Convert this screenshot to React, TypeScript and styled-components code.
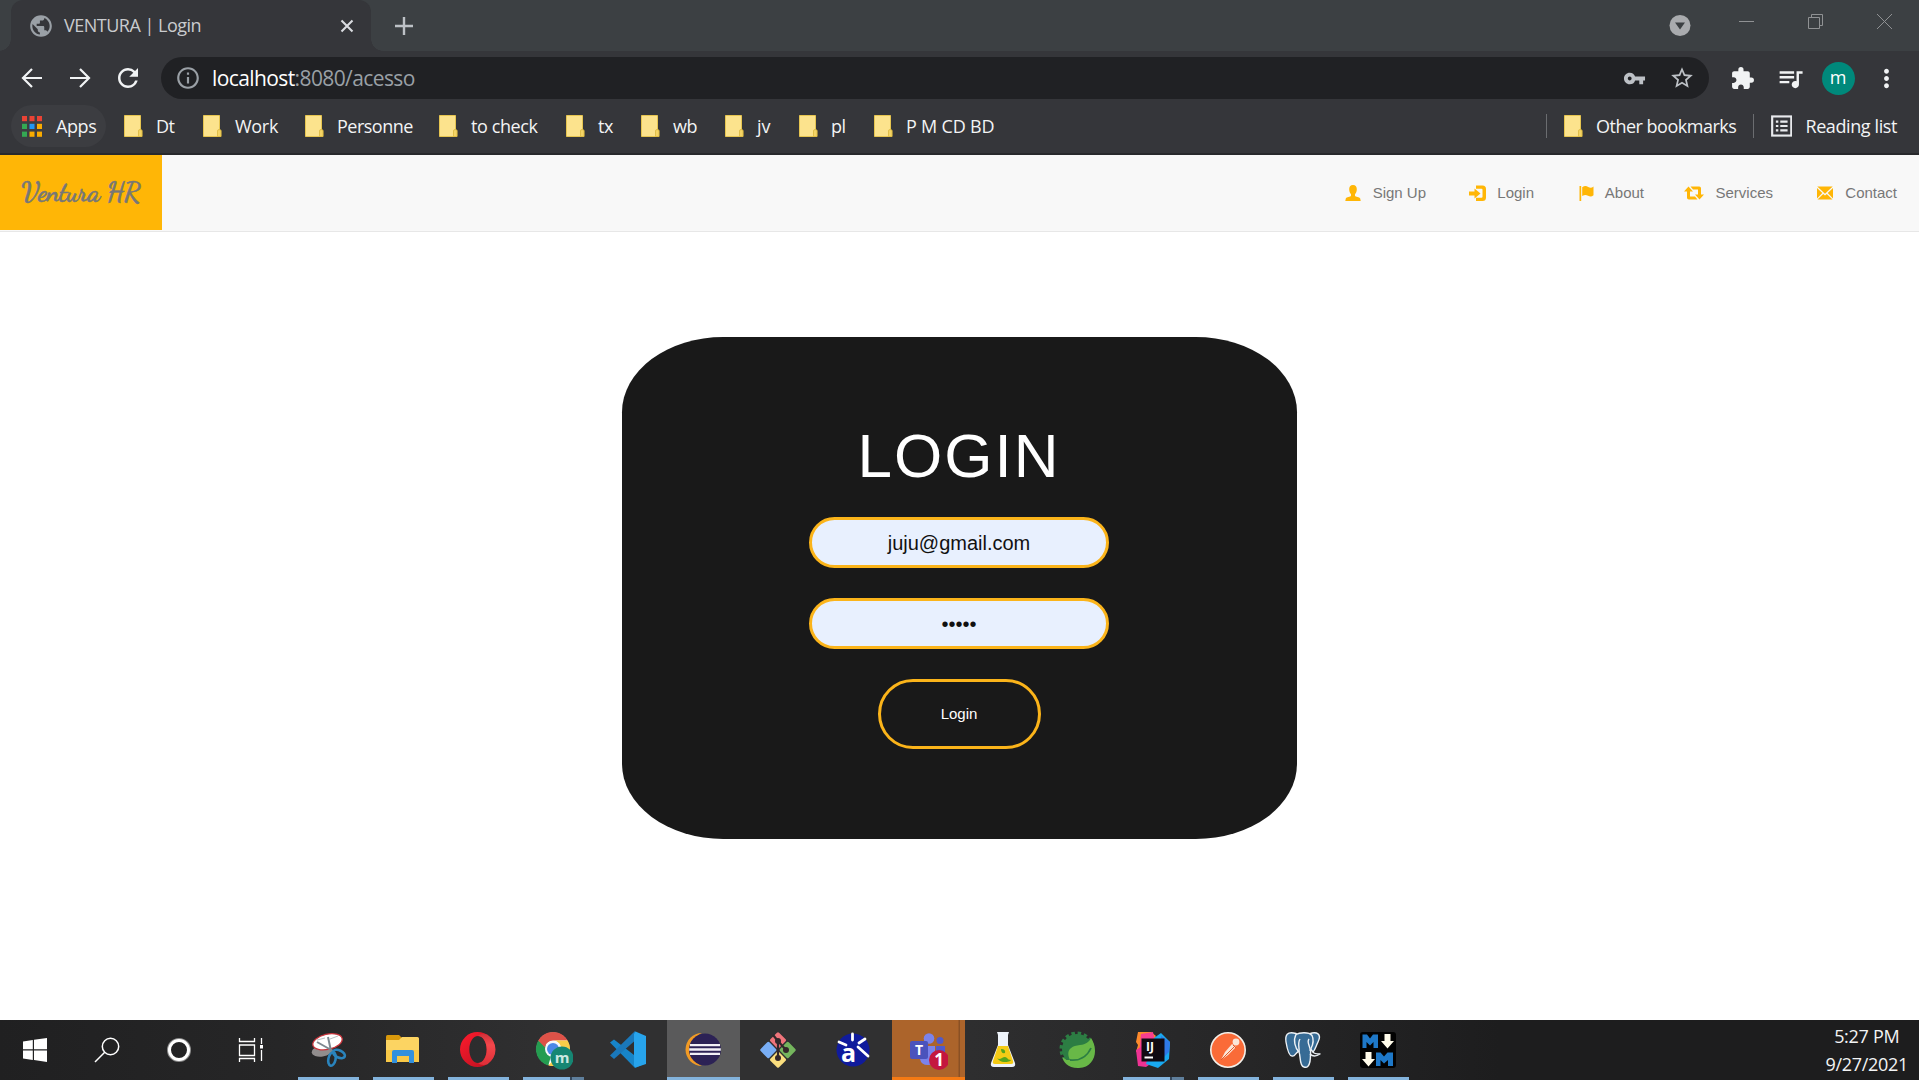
import React from "react";
import styled, { createGlobalStyle, css } from "styled-components";
import {
  MdPublic,
  MdRefresh,
  MdInfoOutline,
  MdVpnKey,
  MdStarBorder,
  MdExtension,
  MdQueueMusic,
  MdMoreVert,
} from "react-icons/md";

const UI_FONT = '"Segoe UI", "Open Sans", "Noto Sans", sans-serif';
const PAGE_FONT = '"Liberation Sans", Arial, sans-serif';
const AMBER = "#ffb606";

const GlobalStyle = createGlobalStyle`
  *, *::before, *::after { box-sizing: border-box; }
  body { margin: 0; background: #fff; overflow: hidden; }
`;

const Screen = styled.div`
  display: flex;
  flex-direction: column;
  width: 1919px;
  height: 1080px;
  background: #fff;
`;

/* ---------- Browser chrome ---------- */

const TabStrip = styled.div`
  display: flex;
  height: 51px;
  flex: none;
  padding-left: 11px;
  background: #3c4043;
`;

const Tab = styled.div`
  position: relative;
  display: flex;
  align-items: center;
  width: 360px;
  padding: 0 14px 0 17px;
  background: #35363a;
  border-radius: 12px 12px 0 0;
  color: #c9cbce;

  &::before,
  &::after {
    content: "";
    position: absolute;
    bottom: 0;
    width: 12px;
    height: 12px;
  }
  &::before {
    left: -12px;
    background: radial-gradient(circle at 0 0, transparent 11.5px, #35363a 12px);
  }
  &::after {
    right: -12px;
    background: radial-gradient(circle at 100% 0, transparent 11.5px, #35363a 12px);
  }
`;

const UiText = styled.span<{ $size?: number; $spacing?: number; $color?: string }>`
  font-family: ${UI_FONT};
  font-size: ${(p) => p.$size ?? 18}px;
  letter-spacing: ${(p) => p.$spacing ?? 0}px;
  color: ${(p) => p.$color ?? "#f3f4f5"};
  line-height: 26px;
  white-space: pre;
`;

const TabTitle = styled(UiText)`
  flex: 1;
  margin: 0 0 1px 10px;
`;

const NewTab = styled.div`
  display: flex;
  align-items: center;
  margin-left: 22px;
`;

const WindowControls = styled.div`
  display: flex;
  align-items: flex-start;
  margin-left: auto;
`;

const TabSearch = styled.div`
  padding-top: 14px;
  margin-right: 21px;
  line-height: 0;
`;

const WindowButton = styled.div`
  width: 69px;
  padding-top: 13px;
  display: flex;
  justify-content: center;
  line-height: 0;
`;

const Toolbar = styled.div`
  display: flex;
  align-items: center;
  flex: none;
  height: 54px;
  padding: 0 9px 0 8px;
  background: #35363a;
  color: #f1f3f4;
`;

const ToolButton = styled.div`
  display: flex;
  align-items: center;
  justify-content: center;
  width: 48px;
  height: 42px;
`;

const Omnibox = styled.div`
  display: flex;
  align-items: center;
  width: 1548px;
  height: 42px;
  margin: 0 9px;
  padding: 0 3px 0 14px;
  border-radius: 21px;
  background: #202124;
  color: #bdc1c6;
`;

const Address = styled.div`
  flex: 1;
  margin-left: 11px;
  display: flex;
`;

const Avatar = styled.div`
  display: flex;
  justify-content: center;
  width: 33px;
  height: 33px;
  padding-top: 2px;
  border-radius: 50%;
  background: #00897b;
`;

const BookmarksBar = styled.div`
  display: flex;
  align-items: center;
  flex: none;
  height: 50px;
  padding: 0 22px 6px 11px;
  background: #35363a;
  border-bottom: 2px solid #28292c;
`;

const AppsButton = styled.div`
  display: flex;
  align-items: center;
  gap: 14px;
  width: 95px;
  height: 42px;
  margin-right: 18px;
  padding-left: 11px;
  border-radius: 21px;
  background: #3c3d41;
`;

const Bookmark = styled.div<{ $width: number }>`
  display: flex;
  align-items: center;
  gap: 13px;
  width: ${(p) => p.$width}px;
`;

const BarLabel = styled(UiText)`
  margin-bottom: 1px;
`;

const Separator = styled.div`
  width: 1px;
  height: 24px;
  background: #6b6d70;
`;

const BookmarksEnd = styled.div`
  display: flex;
  align-items: center;
  margin-left: auto;

  ${Bookmark} {
    padding-left: 17px;
  }
`;

/* ---------- Site header ---------- */

const SiteHeader = styled.header`
  display: flex;
  flex: none;
  height: 77px;
  background: #f8f8f8;
  border-bottom: 1px solid #e7e7e7;
  font-family: ${PAGE_FONT};
`;

const Brand = styled.div`
  width: 162px;
  height: 75px;
  padding-left: 21px;
  background: ${AMBER};
  color: #777;
  font-family: "Dancing Script", cursive;
  font-weight: 700;
  font-size: 27px;
  -webkit-text-stroke: 0.5px #777;
  letter-spacing: -0.3px;
  line-height: 76px;
  white-space: nowrap;
`;

const Nav = styled.nav`
  display: flex;
  align-items: center;
  margin-left: auto;
  padding-right: 22px;
`;

const NavLink = styled.a<{ $width: number }>`
  display: flex;
  align-items: center;
  justify-content: flex-end;
  gap: 11px;
  width: ${(p) => p.$width}px;
  color: #777;
  font-size: 15px;
  line-height: 20px;
`;

/* ---------- Login page ---------- */

const Main = styled.main`
  display: flex;
  flex: 1;
  justify-content: center;
  align-items: flex-start;
  padding: 105px 1px 0 0;
  background: #fff;
  font-family: ${PAGE_FONT};
`;

const Card = styled.form`
  display: flex;
  flex-direction: column;
  align-items: center;
  width: 675px;
  height: 502px;
  padding-top: 84px;
  border-radius: 15%;
  background: #191919;
`;

const Heading = styled.h1`
  margin: 0 0 27px;
  color: #fff;
  font-size: 62px;
  font-weight: 400;
  letter-spacing: 2px;
  line-height: 69px;
`;

const Field = styled.input`
  display: block;
  width: 300px;
  height: 51px;
  margin: 0 0 30px;
  padding: 1px 10px 0;
  border: 3px solid #fbb41a;
  border-radius: 25.5px;
  outline: none;
  background: #e8f0fe;
  color: #111;
  font-family: ${PAGE_FONT};
  font-size: 20px;
  text-align: center;
`;

const Submit = styled.button`
  width: 163px;
  height: 70px;
  padding: 0 0 2px;
  border: 3px solid #fbb41a;
  border-radius: 35px;
  background: none;
  color: #fff;
  font-family: ${PAGE_FONT};
  font-size: 15px;
`;

/* ---------- Taskbar ---------- */

const Taskbar = styled.footer`
  display: flex;
  flex: none;
  height: 60px;
  background: linear-gradient(90deg, #202021 0, #262627 280px, #303031 560px, #303031 900px, #262627 1250px, #1d1d1e 1500px);
`;

const SystemButton = styled.div`
  display: flex;
  align-items: center;
  justify-content: center;
  width: 72px;
`;

const SystemArea = styled.div`
  display: flex;
  width: 290px;
  margin-left: -1px;
  margin-right: 3px;
`;

type TaskState = "idle" | "open" | "stacked" | "active" | "alert";

const TaskSlot = styled.div<{ $state: TaskState }>`
  display: flex;
  flex-direction: column;
  align-items: center;
  width: 73px;
  margin-right: 2px;
  ${(p) => p.$state === "active" && css`background: #5a5a5b;`}
  ${(p) =>
    p.$state === "alert" &&
    css`
      background: linear-gradient(90deg, #ac642b 0 66px, #8a5024 67px 68px, #ac642b 68px);
    `}
`;

const TaskIcon = styled.div`
  display: flex;
  align-items: center;
  justify-content: center;
  height: 57px;
  padding: 3px 1px 0 0;
`;

const TaskLine = styled.div<{ $state: TaskState }>`
  height: 3px;
  width: ${(p) => (p.$state === "active" || p.$state === "alert" ? 73 : 61)}px;
  background: ${(p) =>
    p.$state === "idle"
      ? "transparent"
      : p.$state === "alert"
      ? "#f57a14"
      : p.$state === "stacked"
      ? "linear-gradient(90deg, #83b3dc 0 47px, #34465a 47px 49px, #5f7f9c 49px)"
      : "#83b3dc"};
`;

const Clock = styled.div`
  display: flex;
  flex-direction: column;
  align-items: center;
  justify-content: center;
  gap: 2px;
  margin-left: auto;
  padding: 0 11px 1px 0;
`;

/* ---------- Icons ---------- */

const ArrowIcon = ({ flip }: { flip?: boolean }) => (
  <svg width="22" height="22" viewBox="0 0 22 22" fill="none" stroke="#f1f3f4" strokeWidth="2.2">
    <path d={flip ? "M1 11H20M11 2l9 9-9 9" : "M21 11H2M11 2l-9 9 9 9"} />
  </svg>
);

const CloseIcon = () => (
  <svg width="20" height="20" viewBox="0 0 20 20" stroke="#dadce0" strokeWidth="2.1">
    <path d="M4.5 4.5l11 11M15.5 4.5l-11 11" />
  </svg>
);

const PlusIcon = () => (
  <svg width="22" height="22" viewBox="0 0 22 22" stroke="#bdc1c6" strokeWidth="2.4">
    <path d="M2 11h18M11 2v18" />
  </svg>
);

const FolderIcon = () => (
  <svg width="19" height="22" viewBox="0 0 19 22">
    <path d="M.5.5h16V15h1.3v6.5H.5z" fill="#fce38d" stroke="#e6c550" />
    <path d="M14.5 21.5V16q0-1.500 1.500-1.500t2 1.500v5.500z" fill="#f4d466" stroke="#dbb73d" strokeWidth=".8" />
  </svg>
);

const APP_COLORS = ["#ea4335", "#ea4335", "#ea4335", "#34a853", "#2196f3", "#f9ab00", "#34a853", "#f9ab00", "#f9ab00"];
const AppsIcon = () => (
  <svg width="20" height="21" viewBox="0 0 20 21">
    {APP_COLORS.map((c, i) => (
      <rect key={i} x={(i % 3) * 7.5} y={Math.floor(i / 3) * 7.8} width="5" height="5.2" fill={c} />
    ))}
  </svg>
);

const ReadingIcon = () => (
  <svg width="22" height="22" viewBox="0 0 22 22" fill="none" stroke="#e8eaed">
    <rect x="1.2" y="1.2" width="19.6" height="19.6" strokeWidth="2.2" />
    <path d="M5 6.500h2.500M5 11h2.500M5 15.500h2.500M9.500 6.500H17M9.500 11H17M9.500 15.500H17" strokeWidth="2.2" />
  </svg>
);

const NAV_GLYPHS: Record<string, React.ReactNode> = {
  user: (
    <path d="M8 0C5.400 0 4 1.900 4.200 4.500 4.300 6.500 5 8.200 6 9.200v1.600C5.500 12 1.500 12 .8 13.500L.3 16h15.400l-.5-2.500C14.500 12 10.500 12 10 10.800V9.200c1-1 1.700-2.700 1.800-4.700C12 1.900 10.600 0 8 0z" />
  ),
  login: (
    <path d="M7 .5h6.500Q17 .5 17 4v8.500q0 3.500-3.500 3.500H7v-3.200h5.500q1 0 1-1V4.700q0-1-1-1H7zM5.500 3.500L11.500 8.500l-6 5V10.500H0V6.500h5.500z" />
  ),
  flag: (
    <path d="M.5 1h1.700v15H.5zM3.200 2.200C5.500.7 7.200.7 9.200 1.900s3.500 1 5.300-.4v8.800c-1.800 1.500-3.500 1.500-5.500.4s-3.500-1-5.800.4z" />
  ),
  services: (
    <path d="M4.500 1.500L9 6.500H6v5h5l2.500 3H4.800Q3 14.500 3 12.700V6.500H0zM6.500 1.500h8.700q1.800 0 1.800 1.800v6.200h3l-4.500 5-4.500-5h3v-5H9z" />
  ),
  mail: (
    <path d="M.3 1.500h15.400L8 8.700zM0 2.900L5.300 8 0 13.600zM16 2.900L10.700 8l5.300 5.600zM6.200 8.900L8 10.600l1.800-1.700 5.700 5.600H.5z" />
  ),
};

const NavGlyph = ({ name, width }: { name: string; width: number }) => (
  <svg width={width} height="17" viewBox={`0 0 ${width} 17`} fill={AMBER}>
    {NAV_GLYPHS[name]}
  </svg>
);

const Logo = ({ children }: { children: React.ReactNode }) => (
  <svg width="40" height="40" viewBox="0 0 40 40">
    {children}
  </svg>
);

const LogoText = styled.text`
  font-family: ${UI_FONT};
  font-weight: 700;
  text-anchor: middle;
`;

const SnipLogo = () => (
  <Logo>
    <ellipse cx="14" cy="21" rx="10.500" ry="5.500" transform="rotate(-8 14 21)" fill="#918d8d" />
    <ellipse cx="19.500" cy="11.800" rx="15" ry="7.600" transform="rotate(-13 19.500 11.800)" fill="#fff" stroke="#c9343c" strokeWidth="1.3" />
    <path d="M9 12l16 9M20 7l3 14" stroke="#7d8890" strokeWidth="2" />
    <path d="M9 10l8-2M22 9l8-3" stroke="#b9bec2" strokeWidth="1" />
    <ellipse cx="24" cy="29" rx="3.600" ry="6.800" transform="rotate(12 24 29)" fill="none" stroke="#2a84bd" strokeWidth="2.6" />
    <ellipse cx="31" cy="24" rx="6.300" ry="3.600" transform="rotate(25 31 24)" fill="none" stroke="#2a84bd" strokeWidth="2.6" />
  </Logo>
);

const ExplorerLogo = () => (
  <Logo>
    <path d="M3 6.500Q3 5 4.500 5H16l3 3-3 5H3z" fill="#d9990c" />
    <path d="M3 10h13l3-3h15.500Q36 7 36 8.500V32H3z" fill="#fcd462" />
    <path d="M3 20h33v12H3z" fill="#f8c847" />
    <path d="M9 33V22q0-2 2-2h18q2 0 2 2v11h-5v-7H14v7z" fill="#3290dd" />
  </Logo>
);

const OperaLogo = () => (
  <Logo>
    <defs>
      <linearGradient id="opera" x2="1" y2="1">
        <stop stopColor="#ff1b2d" />
        <stop offset="1" stopColor="#b5101f" />
      </linearGradient>
      <linearGradient id="operaSide" x2="0" y2="1">
        <stop stopColor="#d0323a" />
        <stop offset=".35" stopColor="#f4474b" />
        <stop offset="1" stopColor="#dd2f38" />
      </linearGradient>
    </defs>
    <path fillRule="evenodd" d="M19.500 2a17.500 17.500 0 1 0 0 35 17.500 17.500 0 1 0 0-35zM20 6c5 0 8.700 6 8.700 13.500S25 33 20 33s-8.700-6-8.700-13.500S15 6 20 6z" fill="url(#opera)" />
    <path d="M20 6c2-2 6.500-2.500 9.500-1.200A17.500 17.500 0 0 1 29.500 34.200C26.500 35.500 22 35 20 33c5 0 8.700-6 8.700-13.500S25 6 20 6z" fill="url(#operaSide)" />
  </Logo>
);

const ChromeLogo = () => (
  <Logo>
    <circle cx="20" cy="19" r="16.500" fill="#fff" />
    <path d="M20 19L5.300 10.500a17 17 0 0 0 10 25z" fill="#249c50" />
    <path d="M5.300 10.500A17 17 0 0 1 34.700 10.500H20a8.500 8.500 0 0 0-8 7z" fill="#de5248" />
    <path d="M34.700 10.500A17 17 0 0 1 15.300 35.400L27 23a8.500 8.500 0 0 0-6-12.500z" fill="#f9cd49" />
    <circle cx="20" cy="19" r="8" fill="#f5f7fa" />
    <circle cx="20" cy="19" r="6" fill="#4a87e8" />
    <circle cx="29" cy="28" r="11.500" fill="#168673" />
    <LogoText x="29" y="33" fontSize="15" fill="#cbe8e1">m</LogoText>
  </Logo>
);

const CodeLogo = () => (
  <Logo>
    <path d="M2 12.500l4-3L37 33.500 27 38z" fill="#1785c9" />
    <path d="M2 25.500l4 3.500L30 8 27 1z" fill="#1a78ba" />
    <path d="M27.500 1.500L38 6v28l-10.500 3.500L26 36V4z" fill="#27a4ec" />
  </Logo>
);

const EclipseLogo = () => (
  <Logo>
    <path d="M19 3a16.500 16.500 0 1 0 0 33C7 32 7 7 19 3z" fill="#f29b24" />
    <circle cx="22" cy="19.500" r="16" fill="#2c2255" />
    <path d="M7 15.200h30M6.200 19.500h31.600M7 23.800h30" stroke="#f2f0f5" strokeWidth="2.3" />
  </Logo>
);

const GitLogo = () => (
  <Logo>
    <g transform="rotate(45 20 20)">
      <rect x="7" y="7" width="12.300" height="12.300" rx="1.5" fill="#f0747b" />
      <rect x="20.700" y="7" width="12.300" height="12.300" rx="1.5" fill="#74b55d" />
      <rect x="7" y="20.700" width="12.300" height="12.300" rx="1.5" fill="#79aef5" />
      <rect x="20.700" y="20.700" width="12.300" height="12.300" rx="1.5" fill="#fade7e" />
    </g>
    <path d="M15 5l5 6v17M20 11l8 9" fill="none" stroke="#33272a" strokeWidth="2.2" />
    <circle cx="20" cy="11" r="3" fill="#33272a" />
    <circle cx="28" cy="20" r="3" fill="#33272a" />
    <circle cx="20" cy="28" r="3" fill="#33272a" />
  </Logo>
);

const AstahLogo = () => (
  <Logo>
    <circle cx="20" cy="20" r="16.500" fill="#101b9c" />
    <path d="M19.500 4v6M6 12l7 3M32 9l-6 4M25 17l10 9" stroke="#fff" strokeWidth="2.8" strokeLinecap="round" />
    <LogoText x="15.500" y="31.500" fontSize="25" fill="#fff">a</LogoText>
  </Logo>
);

const TeamsLogo = () => (
  <Logo>
    <circle cx="21" cy="8.500" r="5.300" fill="#7b83eb" />
    <circle cx="32" cy="10.500" r="3.500" fill="#5059c9" />
    <path d="M12 16h15v13q0 6-7 6t-8-6z" fill="#7b83eb" />
    <path d="M28 16h9v11q-3 5-9 2z" fill="#5059c9" />
    <rect x="2" y="11" width="18" height="18" rx="2" fill="#4b53bc" />
    <LogoText x="11" y="25" fontSize="14" fill="#fff">T</LogoText>
    <circle cx="31" cy="30" r="10" fill="#c4173f" />
    <LogoText x="31" y="36" fontSize="17" fill="#fff">1</LogoText>
  </Logo>
);

const FlaskLogo = () => (
  <Logo>
    <path d="M14 2h12l-1 3v10l7 18q1 4-3 4H11q-4 0-3-4l7-18V5z" fill="#eef3fa" />
    <path d="M15 16h10l5 15q1 3-2 3H12q-3 0-2-3z" fill="#f5cb16" />
    <path d="M14 28q3 4 7 4 6 0 7-2-3 0-4-2-2-2-5 0-3 2-5 0zM18 19q5 0 4 4-4 1-4-4z" fill="#58a51c" />
  </Logo>
);

const SpringLogo = () => (
  <Logo>
    <circle cx="19" cy="19" r="15" fill="#2c7d43" />
    <circle cx="19" cy="19" r="15.500" fill="none" stroke="#2c7d43" strokeWidth="4" strokeDasharray="3.4 2.7" />
    <path d="M33 8C41 20 37 37 21 38 10 38.500 5 32 4.500 27 9 31 10 30 12 30 8 22 11 16 22 15c6-.5 9-3 11-7z" fill="#68b847" />
    <path d="M12 30c9 1 17-3 21-12" fill="none" stroke="#2c7d43" strokeWidth="1.800" />
  </Logo>
);

const IntellijLogo = () => (
  <Logo>
    <path d="M5 2h13l5 4-9 14L3 22l2-7-2-3z" fill="#fd8a2c" />
    <path d="M8 4l12-2 3 14-17 8z" fill="#f83e8f" />
    <path d="M3 20l8-5 12 15-10 7-8-1z" fill="#ee3293" />
    <path d="M21 8l7-5 9 9-1 17-11 9-12-4z" fill="#19a9f0" />
    <path d="M28 6l9 6-1 10-8 8z" fill="#2f78e8" />
    <rect x="8.500" y="8.500" width="23" height="23" fill="#100a12" />
    <LogoText x="17" y="20.500" fontSize="12" fill="#fff">IJ</LogoText>
    <path d="M11.500 27.500h8.500" stroke="#fff" strokeWidth="2" />
  </Logo>
);

const PostmanLogo = () => (
  <Logo>
    <circle cx="20" cy="20" r="17.200" fill="#fa6b38" stroke="#f2efe9" strokeWidth="1.6" />
    <circle cx="28" cy="12" r="3.400" fill="#fae5d8" />
    <path d="M24 14l4 3-8 8-7 5 4-8z" fill="#fae5d8" />
    <path d="M13 30l13-13M25 15l3 3" stroke="#e05a2d" strokeWidth="1" />
  </Logo>
);

const PostgresLogo = () => (
  <Logo>
    <g fill="#376b95" stroke="#edf2f6" strokeWidth="1.4" strokeLinejoin="round">
      <path d="M13 3.500C4 1 2 5 3 12c1 6 3 14 6 14 3 1 4-4 6-4V6z" />
      <path d="M26 4c8-3 13 0 9 8-2 4-3 8-5 10l-4-5z" />
      <path d="M13 4.500c3-2 13-3 16 1 2 4 1 9-1 13-1 5 0 7-1 13-1 5-3 6.500-6 5.500-5-1-3-11-5-15-4-4-6-12-3-17.500z" />
      <path d="M17 9c-3 5 0 10-1 13M26 9c-3 4 2 7 1 12" fill="none" />
      <path d="M27 24c3 3 7 2 10 0-3 0-6 0-7-2" fill="none" />
    </g>
  </Logo>
);

const MarkdownLogo = () => (
  <Logo>
    <rect x="2" y="2" width="36" height="36" rx="3" fill="#020202" />
    <path d="M4.500 18V4.500H9l3 4 3-4h5V18h-4.500v-6L12 15.500 8.500 12v6zM18 36V22.500h4.500l3.500 4 3.500-4H35V36h-5v-6l-4 3.500-3.500-3.500v6z" fill="#1e78c8" />
    <path d="M26.500 4h6v7H36l-6.500 7.500L23 11h3.500zM7.500 22h6v7H17l-6.500 7.500L4 29h3.500z" fill="#fffbea" />
  </Logo>
);

/* ---------- Content ---------- */

const BOOKMARKS = [
  { label: "Dt", width: 79, spacing: -0.5 },
  { label: "Work", width: 102, spacing: -0.3 },
  { label: "Personne", width: 134, spacing: -0.5 },
  { label: "to check", width: 127, spacing: -0.4 },
  { label: "tx", width: 75, spacing: -0.4 },
  { label: "wb", width: 84, spacing: -0.4 },
  { label: "jv", width: 74, spacing: 0 },
  { label: "pl", width: 75, spacing: -0.4 },
  { label: "P M CD BD", width: 130, spacing: -0.2 },
];

const NAV_ITEMS = [
  { label: "Sign Up", glyph: "user", icon: 17, width: 90 },
  { label: "Login", glyph: "login", icon: 17, width: 108 },
  { label: "About", glyph: "flag", icon: 15, width: 110 },
  { label: "Services", glyph: "services", icon: 20, width: 129 },
  { label: "Contact", glyph: "mail", icon: 17, width: 124 },
];

const TASKS: { Icon: React.ComponentType; state: TaskState }[] = [
  { Icon: SnipLogo, state: "open" },
  { Icon: ExplorerLogo, state: "open" },
  { Icon: OperaLogo, state: "open" },
  { Icon: ChromeLogo, state: "stacked" },
  { Icon: CodeLogo, state: "idle" },
  { Icon: EclipseLogo, state: "active" },
  { Icon: GitLogo, state: "idle" },
  { Icon: AstahLogo, state: "idle" },
  { Icon: TeamsLogo, state: "alert" },
  { Icon: FlaskLogo, state: "idle" },
  { Icon: SpringLogo, state: "idle" },
  { Icon: IntellijLogo, state: "stacked" },
  { Icon: PostmanLogo, state: "open" },
  { Icon: PostgresLogo, state: "open" },
  { Icon: MarkdownLogo, state: "open" },
];

function BrowserChrome() {
  return (
    <>
      <TabStrip>
        <Tab>
          <MdPublic size={26} color="#9aa0a6" />
          <TabTitle $color="#c9cbce" $spacing={-0.5}>VENTURA | Login</TabTitle>
          <CloseIcon />
        </Tab>
        <NewTab><PlusIcon /></NewTab>
        <WindowControls>
          <TabSearch>
            <svg width="22" height="22" viewBox="0 0 22 22">
              <circle cx="11" cy="11.500" r="10.500" fill="#a9abae" />
              <path d="M6 8.500h10l-5 7z" fill="#3c4043" />
            </svg>
          </TabSearch>
          <WindowButton>
            <svg width="17" height="17" viewBox="0 0 17 17" stroke="#909294"><path d="M1 8.500h15" /></svg>
          </WindowButton>
          <WindowButton>
            <svg width="17" height="17" viewBox="0 0 17 17" stroke="#909294" fill="none">
              <path d="M1.500 4.500h11v11h-11zM4.500 4.500v-3h11v11h-3" />
            </svg>
          </WindowButton>
          <WindowButton>
            <svg width="17" height="17" viewBox="0 0 17 17" stroke="#909294"><path d="M1 1l15 15M16 1L1 16" /></svg>
          </WindowButton>
        </WindowControls>
      </TabStrip>
      <Toolbar>
        <ToolButton><ArrowIcon /></ToolButton>
        <ToolButton><ArrowIcon flip /></ToolButton>
        <ToolButton><MdRefresh size={30} /></ToolButton>
        <Omnibox>
          <MdInfoOutline size={26} color="#9aa0a6" />
          <Address>
            <UiText $size={21} $spacing={-0.6} $color="#fff">localhost</UiText>
            <UiText $size={21} $spacing={-0.6} $color="#9aa0a6">:8080/acesso</UiText>
          </Address>
          <ToolButton><MdVpnKey size={23} /></ToolButton>
          <ToolButton><MdStarBorder size={26} /></ToolButton>
        </Omnibox>
        <ToolButton><MdExtension size={25} /></ToolButton>
        <ToolButton><MdQueueMusic size={29} /></ToolButton>
        <ToolButton>
          <Avatar><UiText $size={18} $color="#fff">m</UiText></Avatar>
        </ToolButton>
        <ToolButton><MdMoreVert size={29} /></ToolButton>
      </Toolbar>
      <BookmarksBar>
        <AppsButton>
          <AppsIcon />
          <BarLabel $spacing={-0.4}>Apps</BarLabel>
        </AppsButton>
        {BOOKMARKS.map((b) => (
          <Bookmark key={b.label} $width={b.width}>
            <FolderIcon />
            <BarLabel $spacing={b.spacing}>{b.label}</BarLabel>
          </Bookmark>
        ))}
        <BookmarksEnd>
          <Separator />
          <Bookmark $width={206}>
            <FolderIcon />
            <BarLabel $spacing={-0.5}>Other bookmarks</BarLabel>
          </Bookmark>
          <Separator />
          <Bookmark $width={143}>
            <ReadingIcon />
            <BarLabel $spacing={-0.4}>Reading list</BarLabel>
          </Bookmark>
        </BookmarksEnd>
      </BookmarksBar>
    </>
  );
}

function LoginPage() {
  return (
    <>
      <SiteHeader>
        <Brand>Ventura HR</Brand>
        <Nav>
          {NAV_ITEMS.map((n) => (
            <NavLink key={n.label} $width={n.width}>
              <NavGlyph name={n.glyph} width={n.icon} />
              {n.label}
            </NavLink>
          ))}
        </Nav>
      </SiteHeader>
      <Main>
        <Card>
          <Heading>LOGIN</Heading>
          <Field type="text" defaultValue="juju@gmail.com" />
          <Field type="password" defaultValue="12345" />
          <Submit type="button">Login</Submit>
        </Card>
      </Main>
    </>
  );
}

function WindowsTaskbar() {
  return (
    <Taskbar>
      <SystemArea>
        <SystemButton>
          <svg width="24" height="24" viewBox="0 0 24 24" fill="#fff">
            <path d="M0 3.400l9.800-1.400v9.300H0zM11 1.800L24 0v11.300H11zM0 12.500h9.800v9.400L0 20.500zM11 12.500h13V24l-13-1.900z" />
          </svg>
        </SystemButton>
        <SystemButton>
          <svg width="26" height="26" viewBox="0 0 26 26" fill="none" stroke="#fff" strokeWidth="1.5">
            <circle cx="16.500" cy="9.500" r="8.200" />
            <path d="M10.700 15.300L1 25" />
          </svg>
        </SystemButton>
        <SystemButton>
          <svg width="26" height="26" viewBox="0 0 26 26" fill="none">
            <circle cx="13" cy="13" r="10.300" stroke="#8c8c8c" strokeWidth="3.5" />
            <circle cx="13" cy="13" r="9.500" stroke="#fff" strokeWidth="3" />
          </svg>
        </SystemButton>
        <SystemButton>
          <svg width="26" height="24" viewBox="0 0 26 24" fill="none" stroke="#fff" strokeWidth="1.3">
            <path d="M1.500 0v3.500h15V0M1.500 7h15v10.500h-15zM1.500 24v-3.500h15V24M23.500 0v6M23.500 12v11" />
            <path d="M22 7h3v3.500h-3z" fill="#fff" stroke="none" />
          </svg>
        </SystemButton>
      </SystemArea>
      {TASKS.map(({ Icon, state }, i) => (
        <TaskSlot key={i} $state={state}>
          <TaskIcon><Icon /></TaskIcon>
          <TaskLine $state={state} />
        </TaskSlot>
      ))}
      <Clock>
        <UiText $spacing={-0.3}>5:27 PM</UiText>
        <UiText $spacing={-0.3}>9/27/2021</UiText>
      </Clock>
    </Taskbar>
  );
}

export default function App() {
  return (
    <Screen>
      <GlobalStyle />
      <BrowserChrome />
      <LoginPage />
      <WindowsTaskbar />
    </Screen>
  );
}
